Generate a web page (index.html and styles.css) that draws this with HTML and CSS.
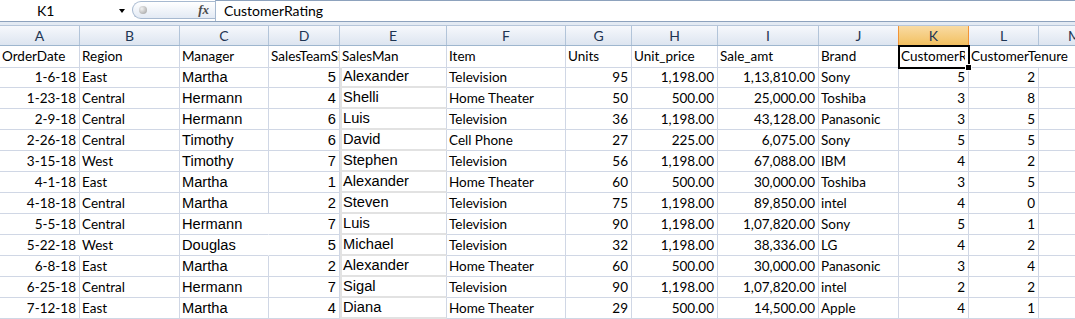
FILE: index.html
```html
<!DOCTYPE html>
<html lang="en">
<head>
    <meta charset="UTF-8">
    <title>Sales Sheet</title>
    <link rel="stylesheet" href="styles.css">
</head>
<body>

    <!-- Formula bar -->
    <div class="formula-bar">
        <div class="name-box">
            <span class="name">K1</span>
            <span class="arrow"></span>
        </div>
        <div class="fx-pill">
            <span class="knob"></span>
            <span class="fx">fx</span>
        </div>
        <div class="formula-input">CustomerRating</div>
    </div>
    <div class="bar-gap"></div>

    <div class="sheet">
        <div class="row col-heads">
            <div>A</div><div>B</div><div>C</div><div>D</div><div>E</div><div>F</div><div>G</div>
            <div>H</div><div>I</div><div>J</div><div class="active">K</div><div>L</div><div>M</div>
        </div>

        <div class="row">
            <div class="cell">OrderDate</div>
            <div class="cell">Region</div>
            <div class="cell">Manager</div>
            <div class="cell">SalesTeamSize</div>
            <div class="cell">SalesMan</div>
            <div class="cell">Item</div>
            <div class="cell">Units</div>
            <div class="cell">Unit_price</div>
            <div class="cell">Sale_amt</div>
            <div class="cell">Brand</div>
            <div class="cell selected"><span class="clip">CustomerRating</span></div>
            <div class="cell spill">CustomerTenure</div>
            <div class="cell"></div>
        </div>

        <div class="row">
            <div class="cell num">1-6-18</div><div class="cell">East</div><div class="cell ar">Martha</div><div class="cell num ar">5</div><div class="cell ar sm">Alexander</div><div class="cell">Television</div><div class="cell num">95</div><div class="cell num">1,198.00</div><div class="cell num">1,13,810.00</div><div class="cell">Sony</div><div class="cell num">5</div><div class="cell num">2</div><div class="cell"></div>
        </div>
        <div class="row">
            <div class="cell num">1-23-18</div><div class="cell">Central</div><div class="cell ar">Hermann</div><div class="cell num ar">4</div><div class="cell ar sm">Shelli</div><div class="cell">Home Theater</div><div class="cell num">50</div><div class="cell num">500.00</div><div class="cell num">25,000.00</div><div class="cell">Toshiba</div><div class="cell num">3</div><div class="cell num">8</div><div class="cell"></div>
        </div>
        <div class="row">
            <div class="cell num">2-9-18</div><div class="cell">Central</div><div class="cell ar">Hermann</div><div class="cell num ar">6</div><div class="cell ar sm">Luis</div><div class="cell">Television</div><div class="cell num">36</div><div class="cell num">1,198.00</div><div class="cell num">43,128.00</div><div class="cell">Panasonic</div><div class="cell num">3</div><div class="cell num">5</div><div class="cell"></div>
        </div>
        <div class="row">
            <div class="cell num">2-26-18</div><div class="cell">Central</div><div class="cell ar">Timothy</div><div class="cell num ar">6</div><div class="cell ar sm">David</div><div class="cell">Cell Phone</div><div class="cell num">27</div><div class="cell num">225.00</div><div class="cell num">6,075.00</div><div class="cell">Sony</div><div class="cell num">5</div><div class="cell num">5</div><div class="cell"></div>
        </div>
        <div class="row">
            <div class="cell num">3-15-18</div><div class="cell">West</div><div class="cell ar">Timothy</div><div class="cell num ar">7</div><div class="cell ar sm">Stephen</div><div class="cell">Television</div><div class="cell num">56</div><div class="cell num">1,198.00</div><div class="cell num">67,088.00</div><div class="cell">IBM</div><div class="cell num">4</div><div class="cell num">2</div><div class="cell"></div>
        </div>
        <div class="row">
            <div class="cell num">4-1-18</div><div class="cell">East</div><div class="cell ar">Martha</div><div class="cell num ar">1</div><div class="cell ar sm">Alexander</div><div class="cell">Home Theater</div><div class="cell num">60</div><div class="cell num">500.00</div><div class="cell num">30,000.00</div><div class="cell">Toshiba</div><div class="cell num">3</div><div class="cell num">5</div><div class="cell"></div>
        </div>
        <div class="row">
            <div class="cell num">4-18-18</div><div class="cell">Central</div><div class="cell ar">Martha</div><div class="cell num ar">2</div><div class="cell ar sm">Steven</div><div class="cell">Television</div><div class="cell num">75</div><div class="cell num">1,198.00</div><div class="cell num">89,850.00</div><div class="cell">intel</div><div class="cell num">4</div><div class="cell num">0</div><div class="cell"></div>
        </div>
        <div class="row">
            <div class="cell num">5-5-18</div><div class="cell">Central</div><div class="cell ar no-right">Hermann</div><div class="cell num ar">7</div><div class="cell ar sm">Luis</div><div class="cell">Television</div><div class="cell num">90</div><div class="cell num">1,198.00</div><div class="cell num">1,07,820.00</div><div class="cell">Sony</div><div class="cell num">5</div><div class="cell num">1</div><div class="cell"></div>
        </div>
        <div class="row">
            <div class="cell num no-right">5-22-18</div><div class="cell">West</div><div class="cell ar no-right">Douglas</div><div class="cell num ar">5</div><div class="cell ar sm">Michael</div><div class="cell">Television</div><div class="cell num">32</div><div class="cell num">1,198.00</div><div class="cell num">38,336.00</div><div class="cell">LG</div><div class="cell num">4</div><div class="cell num">2</div><div class="cell"></div>
        </div>
        <div class="row">
            <div class="cell num">6-8-18</div><div class="cell">East</div><div class="cell ar">Martha</div><div class="cell num ar">2</div><div class="cell ar sm">Alexander</div><div class="cell">Home Theater</div><div class="cell num">60</div><div class="cell num">500.00</div><div class="cell num">30,000.00</div><div class="cell">Panasonic</div><div class="cell num">3</div><div class="cell num">4</div><div class="cell"></div>
        </div>
        <div class="row">
            <div class="cell num">6-25-18</div><div class="cell">Central</div><div class="cell ar">Hermann</div><div class="cell num ar">7</div><div class="cell ar sm">Sigal</div><div class="cell">Television</div><div class="cell num">90</div><div class="cell num">1,198.00</div><div class="cell num">1,07,820.00</div><div class="cell">intel</div><div class="cell num">2</div><div class="cell num">2</div><div class="cell"></div>
        </div>
        <div class="row">
            <div class="cell num">7-12-18</div><div class="cell">East</div><div class="cell ar">Martha</div><div class="cell num ar">4</div><div class="cell ar sm">Diana</div><div class="cell">Home Theater</div><div class="cell num">29</div><div class="cell num">500.00</div><div class="cell num">14,500.00</div><div class="cell">Apple</div><div class="cell num">4</div><div class="cell num">1</div><div class="cell"></div>
        </div>
    </div>

</body>
</html>
```

FILE: styles.css
```css
body {
    margin: 0;
    padding: 0;
    width: 1075px;
    height: 319px;
    overflow: hidden;
    background-color: white;
    font-family: Lato, "Open Sans", sans-serif;
    font-size: 13.5px;
    color: #000;
}

/* Formula bar */
.formula-bar {
    display: flex;
    height: 21px;
    border-bottom: 1px solid #8da2bd;
}
.name-box {
    width: 132px;
    display: flex;
    align-items: center;
    box-sizing: border-box;
}
.name-box .name {
    margin-left: 37px;
    font-size: 14px;
}
.name-box .arrow {
    margin-left: auto;
    margin-right: 7px;
    width: 0;
    height: 0;
    border-left: 3px solid transparent;
    border-right: 3px solid transparent;
    border-top: 4px solid #000;
}
.fx-pill {
    width: 83px;
    height: 18px;
    margin-top: 1px;
    box-sizing: border-box;
    border: 1px solid #a7b9d0;
    border-right: none;
    border-radius: 10px 0 0 10px;
    background: linear-gradient(#ffffff, #e3eaf4);
    display: flex;
    align-items: center;
}
.fx-pill .knob {
    width: 8px;
    height: 8px;
    margin-left: 6px;
    border-radius: 50%;
    background: radial-gradient(circle at 35% 35%, #f2f2f2, #9b9b9b);
}
.fx-pill .fx {
    margin-left: auto;
    margin-right: 6px;
    font-family: "Liberation Serif", serif;
    font-style: italic;
    font-weight: bold;
    font-size: 13px;
    color: #4a4a4a;
}
.formula-input {
    flex: 1;
    border-top: 1px solid #8da2bd;
    border-left: 1px solid #a7b9d0;
    padding-left: 8px;
    line-height: 20px;
    font-size: 14px;
}
.bar-gap {
    height: 4px;
    background-color: #e3eaf3;
    border-bottom: 1px solid #b6c6da;
    box-sizing: border-box;
}

/* Sheet grid */
.row {
    display: grid;
    grid-template-columns: 80px 100px 89px 71px 107px 119px 66px 86px 101px 80px 70px 70px 72px;
    height: 21px;
}
.col-heads {
    height: 20px;
    background: linear-gradient(#f6f8fc, #dde5f0);
    border-bottom: 1px solid #9eb6ce;
    box-sizing: border-box;
}
.col-heads div {
    border-right: 1px solid #b2c4d9;
    text-align: center;
    line-height: 19px;
    color: #1e3553;
    font-size: 14px;
}
.col-heads .active {
    background: linear-gradient(#f9dba3, #f2c061);
    border-right-color: #f29436;
    border-left: 1px solid #f29436;
    margin-left: -1px;
}
.cell {
    box-sizing: border-box;
    border-right: 1px solid #d0d7e5;
    border-bottom: 1px solid #d0d7e5;
    padding: 0 3px 0 2px;
    line-height: 21px;
    white-space: nowrap;
    overflow: hidden;
}
.cell.num {
    text-align: right;
}
.cell.ar {
    font-family: "Liberation Sans", Arial, sans-serif;
    font-size: 14.67px;
}
.cell.sm {
    border-left: 2px solid #e2e2e2;
    border-bottom: 2px solid #e2e2e2;
    padding-left: 1px;
    line-height: 19px;
}
.cell.no-right {
    border-right-color: transparent;
}
.cell.spill {
    overflow: visible;
    border-right-color: transparent;
    position: relative;
    z-index: 1;
}
.cell.selected {
    position: relative;
    overflow: visible;
    outline: 2px solid #000;
    outline-offset: -1px;
}
.cell.selected .clip {
    display: block;
    overflow: hidden;
}
.cell.selected::after {
    content: "";
    position: absolute;
    right: -4px;
    bottom: -4px;
    width: 5px;
    height: 5px;
    background-color: #000;
    border: 1px solid #fff;
    z-index: 2;
}
```
